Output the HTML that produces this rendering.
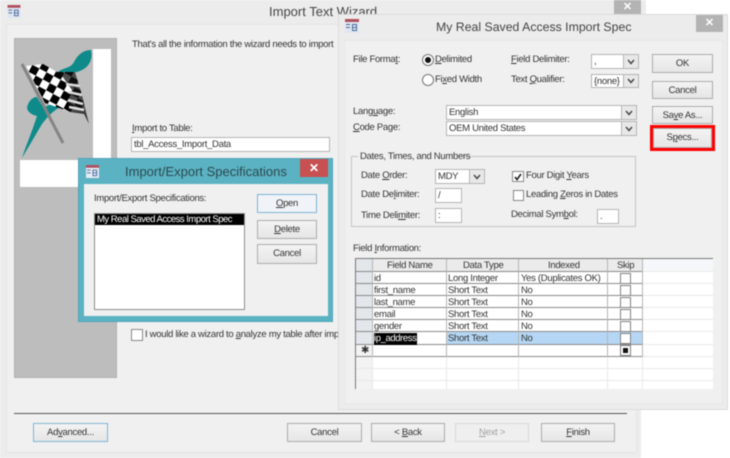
<!DOCTYPE html>
<html><head><meta charset="utf-8">
<style>
html,body{margin:0;padding:0;background:#fff}
#p{position:relative;width:730px;height:458px;overflow:hidden;background:#fff;font-family:"Liberation Sans",sans-serif;font-size:9.5px;color:#333;filter:blur(.45px);text-rendering:geometricPrecision}
#p div{position:absolute;box-sizing:border-box}
.t{white-space:nowrap;line-height:12px;height:12px;letter-spacing:-.3px;margin-top:1px}
.b{background:linear-gradient(#f3f3f3,#e6e6e6);border:1px solid #ababab;text-align:center;line-height:18px;white-space:nowrap;letter-spacing:-.3px}
.f{border-color:#7eb4d6!important}
.i{background:#fff;border:1px solid #b4b4b4;line-height:14px;padding-left:2px;white-space:nowrap;overflow:hidden;letter-spacing:-.3px}
.a{top:0;bottom:0;right:0;background:#e8e8e8;border-left:1px solid #b4b4b4}
.a svg{position:absolute;left:50%;top:50%;margin:-3px 0 0 -4px}
.ttl{font-size:14.5px;line-height:18px;height:18px;white-space:nowrap;color:#444}
.c{background:#fff;border:1px solid #808080}
.l{background:#8a8a8a}
.v{background:#b4b4b4}
.h{background:#e8e8e8}
</style></head><body><div id="p">

<!-- wizard window -->
<div style="left:0;top:0;width:646px;height:458px;background:#ececec"></div>
<div style="left:6px;top:24px;width:631px;height:429px;background:#f0f0f0;border:1px solid #e4e4e4"></div>
<div style="left:614px;top:0;width:27px;height:15px;background:#b3b3b3;color:#fff;text-align:center;font-weight:bold;font-size:11px;line-height:15px">✕</div>
<div style="left:646px;top:0;width:84px;height:14px;background:#fff"></div>
<div style="left:646px;top:14px;width:84px;height:444px;background:#fff"></div>
<div style="left:641px;top:410px;width:89px;height:48px;background:#fff"></div>
<div class="ttl" style="left:269px;top:3px;font-size:13px">Import Text Wizard</div>
<svg style="position:absolute;left:7px;top:5px" width="14" height="13" viewBox="0 0 14 14"><rect width="14" height="14" fill="#dfe6f2"/><rect width="14" height="3" fill="#b0505f"/><rect x="1" y="5" width="4" height="1" fill="#4a6a9a"/><rect x="1" y="8" width="4" height="1" fill="#4a6a9a"/><rect x="7.500" y="5.500" width="4" height="6" fill="none" stroke="#4a6a9a"/><rect x="7" y="8" width="5" height="1" fill="#4a6a9a"/></svg>

<!-- sidebar image -->
<div style="left:14px;top:38px;width:103px;height:340px;background:#bdbdbd;border:1px solid #b0b0b0"></div>
<div style="left:93px;top:49px;width:18px;height:112px;background:#fff"></div>
<div style="left:20px;top:160px;width:91px;height:27px;background:#fff"></div>
<svg style="position:absolute;left:0;top:0" width="130" height="170" viewBox="0 0 130 170">
<defs><pattern id="ck" width="16" height="16" patternUnits="userSpaceOnUse" patternTransform="rotate(28) translate(3 2)"><rect width="16" height="16" fill="#fff"/><rect width="8" height="8" fill="#000"/><rect x="8" y="8" width="8" height="8" fill="#000"/></pattern></defs>
<path d="M58 72C64 67 70 69 74 62C78 54 84 50 91 50C93 58 90 66 82 70C74 74 66 74 58 72Z" fill="#0e8a8a"/>
<path d="M27 108C28 102 32 97 37 97C39 101 41 104 44 108C50 103 56 103 62 106C54 110 48 116 42 124C36 134 28 148 22 158C25 148 32 132 37 116C33 115 28 113 27 108Z" fill="#0e8a8a"/>
<path d="M26 66L43 64L57 72L75 72L82 95L85 110L70 112L62 109L45 103Z" fill="url(#ck)"/>
<path d="M60 73L75 72L82 95L86 112L89 124L84 114L70 112L68 100L72 90Z" fill="#111" opacity=".75"/>
<path d="M66 84L80 86M68 92L82 95M68 100L83 104M69 107L84 110" stroke="#ddd" stroke-width="2.500"/>
<path d="M22 64L63 143" stroke="#858585" stroke-width="3"/>
</svg>

<!-- wizard text -->
<div class="t" style="left:132px;top:38px">That's all the information the wizard needs to import</div>
<div class="t" style="left:132px;top:122px"><u>I</u>mport to Table:</div>
<div class="i" style="left:131px;top:137px;width:199px;height:15px">tbl_Access_Import_Data</div>
<div class="c" style="left:131px;top:329px;width:12px;height:12px;border-color:#8a8a8a"></div>
<div class="t" style="left:145px;top:328px;width:193px;overflow:hidden">I would like a wizard to <u>a</u>nalyze my table after import</div>
<div style="left:14px;top:413px;width:613px;height:1px;background:#555"></div>
<div class="b f" style="left:33px;top:423px;width:75px;height:19px">Ad<u>v</u>anced...</div>
<div class="b" style="left:287px;top:423px;width:75px;height:19px">Cancel</div>
<div class="b" style="left:371px;top:423px;width:74px;height:19px">&lt; <u>B</u>ack</div>
<div class="b" style="left:455px;top:423px;width:74px;height:19px;color:#a0a0a0;background:#efefef;border-color:#d8d8d8"><u>N</u>ext &gt;</div>
<div class="b" style="left:541px;top:423px;width:74px;height:19px"><u>F</u>inish</div>

<!-- import/export dialog -->
<div style="left:78px;top:158px;width:255px;height:164px;background:#5ab2c3;border:1px solid #4ea5b7"></div>
<div style="left:84px;top:184px;width:244px;height:132px;background:#f0f0f0"></div>
<div style="left:300px;top:159px;width:28px;height:18px;background:#c75050;color:#fff;text-align:center;font-weight:bold;font-size:12px;line-height:18px">✕</div>
<div class="ttl" style="left:125px;top:163px;color:#2c4a50;font-size:13px">Import/Export Specifications</div>
<svg style="position:absolute;left:86px;top:165px" width="13" height="13" viewBox="0 0 14 14"><rect width="14" height="14" fill="#e8edf5"/><rect width="14" height="3" fill="#b0505f"/><rect x="1" y="5" width="4" height="1" fill="#4a6a9a"/><rect x="1" y="8" width="4" height="1" fill="#4a6a9a"/><rect x="7.500" y="5.500" width="4" height="6" fill="none" stroke="#4a6a9a"/><rect x="7" y="8" width="5" height="1" fill="#4a6a9a"/></svg>
<div class="t" style="left:94px;top:192px">Import/Export Specifications:</div>
<div style="left:94px;top:213px;width:151px;height:97px;background:#fff;border:1px solid #8c8c8c"></div>
<div class="t" style="left:95px;top:213px;width:149px;height:11px;background:#000;color:#fff;padding-left:2px;line-height:11px;letter-spacing:-.5px">My Real Saved Access Import Spec</div>
<div class="b f" style="left:257px;top:194px;width:60px;height:19px;background:#f0f4f8"><u>O</u>pen</div>
<div class="b" style="left:257px;top:220px;width:60px;height:19px"><u>D</u>elete</div>
<div class="b" style="left:257px;top:244px;width:60px;height:20px">Cancel</div>

<!-- spec window -->
<div style="left:338px;top:14px;width:390px;height:396px;background:#ececec;border:1px solid #dcdcdc"></div>
<div style="left:344px;top:40px;width:379px;height:364px;background:#f0f0f0;border:1px solid #e6e6e6"></div>
<div style="left:696px;top:15px;width:27px;height:17px;background:#b3b3b3;color:#fff;text-align:center;font-weight:bold;font-size:11px;line-height:17px">✕</div>
<svg style="position:absolute;left:345px;top:19px" width="14" height="14" viewBox="0 0 14 14"><rect width="14" height="14" fill="#dfe6f2"/><rect width="14" height="3" fill="#b0505f"/><rect x="1" y="5" width="4" height="1" fill="#4a6a9a"/><rect x="1" y="8" width="4" height="1" fill="#4a6a9a"/><rect x="7.500" y="5.500" width="4" height="6" fill="none" stroke="#4a6a9a"/><rect x="7" y="8" width="5" height="1" fill="#4a6a9a"/></svg>
<div class="ttl" style="left:436px;top:18px;font-size:12.300px">My Real Saved Access Import Spec</div>

<div class="t" style="left:353px;top:53px">File Forma<u>t</u>:</div>
<svg style="position:absolute;left:421px;top:53px" width="14" height="36" viewBox="0 0 14 36"><circle cx="7" cy="7" r="5.500" fill="#fff" stroke="#777"/><circle cx="7" cy="7" r="3" fill="#111"/><circle cx="7" cy="27" r="5.500" fill="#fff" stroke="#777"/></svg>
<div class="t" style="left:435px;top:53px"><u>D</u>elimited</div>
<div class="t" style="left:435px;top:73px">Fi<u>x</u>ed Width</div>
<div class="t" style="left:511px;top:53px"><u>F</u>ield Delimiter:</div>
<div class="t" style="left:511px;top:73px">Text <u>Q</u>ualifier:</div>
<div class="i" style="left:591px;top:54px;width:48px;height:15px">,<div class="a" style="width:15px"><svg width="8" height="6"><path d="M1 1L4 4.500L7 1" fill="none" stroke="#444" stroke-width="1.400"/></svg></div></div>
<div class="i" style="left:591px;top:74px;width:48px;height:14px;line-height:13px">{none}<div class="a" style="width:15px"><svg width="8" height="6"><path d="M1 1L4 4.500L7 1" fill="none" stroke="#444" stroke-width="1.400"/></svg></div></div>
<div class="t" style="left:353px;top:105px">Lang<u>u</u>age:</div>
<div class="t" style="left:353px;top:121px"><u>C</u>ode Page:</div>
<div class="i" style="left:446px;top:105px;width:191px;height:15px">English<div class="a" style="width:15px"><svg width="8" height="6"><path d="M1 1L4 4.500L7 1" fill="none" stroke="#444" stroke-width="1.400"/></svg></div></div>
<div class="i" style="left:446px;top:121px;width:191px;height:15px">OEM United States<div class="a" style="width:15px"><svg width="8" height="6"><path d="M1 1L4 4.500L7 1" fill="none" stroke="#444" stroke-width="1.400"/></svg></div></div>

<div class="b" style="left:652px;top:54px;width:61px;height:19px">OK</div>
<div class="b" style="left:652px;top:81px;width:61px;height:18px;line-height:17px">Cancel</div>
<div class="b" style="left:652px;top:106px;width:61px;height:18px;line-height:17px">Sa<u>v</u>e As...</div>
<div class="b" style="left:653px;top:128px;width:59px;height:20px">S<u>p</u>ecs...</div>
<div style="left:650px;top:125px;width:65px;height:26px;border:3px solid #f00"></div>

<div style="left:351px;top:156px;width:285px;height:71px;border:1px solid #c4c4c4"></div>
<div class="t" style="left:358px;top:150px;background:#f0f0f0;padding:0 2px;width:106px">Dates, Times, and Numbers</div>
<div class="t" style="left:361px;top:169px">Date <u>O</u>rder:</div>
<div class="t" style="left:361px;top:188px">Date De<u>l</u>imiter:</div>
<div class="t" style="left:361px;top:209px">Time Deli<u>m</u>iter:</div>
<div class="i" style="left:435px;top:169px;width:50px;height:15px">MDY<div class="a" style="width:15px"><svg width="8" height="6"><path d="M1 1L4 4.500L7 1" fill="none" stroke="#444" stroke-width="1.400"/></svg></div></div>
<div class="i" style="left:435px;top:188px;width:27px;height:15px">/</div>
<div class="i" style="left:435px;top:208px;width:27px;height:15px">:</div>
<div class="c" style="left:512px;top:171px;width:12px;height:11px;border-color:#8a8a8a"></div>
<svg style="position:absolute;left:513px;top:172px" width="10" height="10"><path d="M2 5L4 7.500L8 2" fill="none" stroke="#222" stroke-width="1.600"/></svg>
<div class="c" style="left:513px;top:190px;width:11px;height:11px;border-color:#8a8a8a"></div>
<div class="t" style="left:526px;top:169px">Four Digit <u>Y</u>ears</div>
<div class="t" style="left:526px;top:188px">Leading <u>Z</u>eros in Dates</div>
<div class="t" style="left:511px;top:208px">Decimal Sym<u>b</u>ol:</div>
<div class="i" style="left:597px;top:209px;width:22px;height:15px">.</div>

<!-- grid -->
<div class="t" style="left:353px;top:242px">Field <u>I</u>nformation:</div>
<div style="left:355px;top:258px;width:358px;height:131px;background:#fff;border-top:1px solid #777;border-left:1px solid #777"></div>
<div style="left:356px;top:259px;width:16px;height:85px;background:#e3e6ea"></div>
<div style="left:356px;top:344px;width:16px;height:45px;background:#f3f3f3"></div>
<div style="left:372px;top:259px;width:270px;height:12px;background:#ebebeb"></div>
<div style="left:642px;top:259px;width:71px;height:12px;background:#f5f7fa"></div>
<div class="t" style="left:387px;top:259px">Field Name</div>
<div class="t" style="left:463px;top:259px">Data Type</div>
<div class="t" style="left:548px;top:259px">Indexed</div>
<div class="t" style="left:617px;top:259px">Skip</div>

<!-- row highlight -->
<div style="left:446px;top:332px;width:196px;height:12px;background:#b5d7f5"></div>

<!-- horizontal lines -->
<div class="l" style="left:356px;top:271px;width:286px;height:1px"></div>
<div class="l" style="left:356px;top:283px;width:286px;height:1px"></div>
<div class="l" style="left:356px;top:295px;width:286px;height:1px"></div>
<div class="l" style="left:356px;top:307px;width:286px;height:1px"></div>
<div class="l" style="left:356px;top:319px;width:286px;height:1px"></div>
<div class="l" style="left:356px;top:331px;width:286px;height:1px"></div>
<div class="l" style="left:356px;top:344px;width:286px;height:1px"></div>
<div class="l" style="left:356px;top:356px;width:286px;height:1px"></div>
<div class="h" style="left:642px;top:271px;width:71px;height:1px"></div>
<div class="h" style="left:642px;top:283px;width:71px;height:1px"></div>
<div class="h" style="left:642px;top:295px;width:71px;height:1px"></div>
<div class="h" style="left:642px;top:307px;width:71px;height:1px"></div>
<div class="h" style="left:642px;top:319px;width:71px;height:1px"></div>
<div class="h" style="left:642px;top:331px;width:71px;height:1px"></div>
<div class="h" style="left:642px;top:344px;width:71px;height:1px"></div>
<div class="h" style="left:642px;top:356px;width:71px;height:1px"></div>
<div class="h" style="left:356px;top:368px;width:357px;height:1px"></div>
<div class="h" style="left:356px;top:380px;width:357px;height:1px"></div>

<!-- vertical lines -->
<div class="v" style="left:372px;top:259px;width:1px;height:98px"></div>
<div class="v" style="left:446px;top:259px;width:1px;height:98px"></div>
<div class="v" style="left:518px;top:259px;width:1px;height:98px"></div>
<div class="v" style="left:607px;top:259px;width:1px;height:98px"></div>
<div class="v" style="left:642px;top:259px;width:1px;height:98px"></div>
<div class="h" style="left:372px;top:357px;width:1px;height:32px"></div>
<div class="h" style="left:446px;top:357px;width:1px;height:32px"></div>
<div class="h" style="left:518px;top:357px;width:1px;height:32px"></div>
<div class="h" style="left:607px;top:357px;width:1px;height:32px"></div>
<div class="h" style="left:642px;top:357px;width:1px;height:32px"></div>

<!-- rows -->
<div class="t" style="left:374px;top:272px">id</div><div class="t" style="left:448px;top:272px">Long Integer</div><div class="t" style="left:521px;top:272px">Yes (Duplicates OK)</div>
<div class="t" style="left:374px;top:284px">first_name</div><div class="t" style="left:448px;top:284px">Short Text</div><div class="t" style="left:521px;top:284px">No</div>
<div class="t" style="left:374px;top:296px">last_name</div><div class="t" style="left:448px;top:296px">Short Text</div><div class="t" style="left:521px;top:296px">No</div>
<div class="t" style="left:374px;top:308px">email</div><div class="t" style="left:448px;top:308px">Short Text</div><div class="t" style="left:521px;top:308px">No</div>
<div class="t" style="left:374px;top:320px">gender</div><div class="t" style="left:448px;top:320px">Short Text</div><div class="t" style="left:521px;top:320px">No</div>
<div class="t" style="left:374px;top:332px;background:#000;color:#fff;width:43px;letter-spacing:-.4px">ip_address</div><div class="t" style="left:448px;top:332px">Short Text</div><div class="t" style="left:521px;top:332px">No</div>
<div class="t" style="left:361px;top:344px;font-size:10px;letter-spacing:0">✱</div>

<!-- skip boxes -->
<div class="c" style="left:620px;top:273px;width:11px;height:11px"></div>
<div class="c" style="left:620px;top:285px;width:11px;height:11px"></div>
<div class="c" style="left:620px;top:297px;width:11px;height:11px"></div>
<div class="c" style="left:620px;top:309px;width:11px;height:11px"></div>
<div class="c" style="left:620px;top:321px;width:11px;height:11px"></div>
<div class="c" style="left:620px;top:333px;width:11px;height:11px"></div>
<div class="c" style="left:620px;top:345px;width:11px;height:11px"></div>
<div style="left:623px;top:348px;width:5px;height:5px;background:#111"></div>

</div></body></html>
